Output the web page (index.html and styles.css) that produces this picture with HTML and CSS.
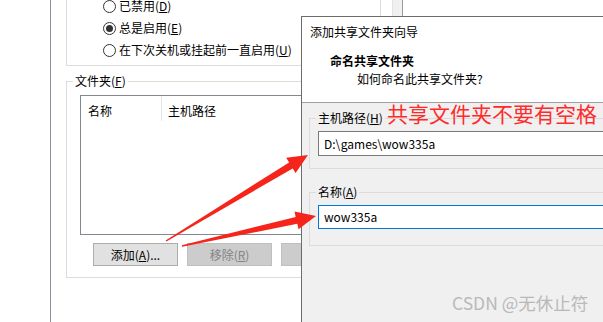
FILE: index.html
```html
<!DOCTYPE html>
<html lang="zh-CN">
<head>
<meta charset="utf-8">
<title>共享文件夹</title>
<link rel="stylesheet" href="styles.css">
</head>
<body>
<div class="desk">
  <div class="win">
    <div class="page">
      <div class="grp-top">
        <div class="radios">
          <div class="radio"><span class="dot"></span>已禁用(<u>D</u>)</div>
          <div class="radio"><span class="dot on"></span>总是启用(<u>E</u>)</div>
          <div class="radio"><span class="dot"></span>在下次关机或挂起前一直启用(<u>U</u>)</div>
        </div>
      </div>
      <fieldset class="grp grp-folder">
        <legend>文件夹(<u>F</u>)</legend>
        <div class="list">
          <div class="list-head">
            <span class="col c1">名称</span>
            <span class="col c2">主机路径</span>
          </div>
        </div>
        <div class="btns">
          <button class="btn">添加(<u>A</u>)...</button>
          <button class="btn dis">移除(<u>R</u>)</button>
          <button class="btn dis"></button>
        </div>
      </fieldset>
    </div>
    <div class="sbar"></div>
  </div>

  <div class="dialog">
    <div class="dlg-head">
      <div class="dlg-title">添加共享文件夹向导</div>
      <div class="dlg-h1">命名共享文件夹</div>
      <div class="dlg-h2">如何命名此共享文件夹?</div>
    </div>
    <div class="dlg-body">
      <fieldset class="grp dgrp g1">
        <legend>主机路径(<u>H</u>)</legend>
        <div class="tb">D:\games\wow335a</div>
      </fieldset>
      <fieldset class="grp dgrp g2">
        <legend>名称(<u>A</u>)</legend>
        <div class="tb focus">wow335a</div>
      </fieldset>
    </div>
  </div>

  <div class="note">共享文件夹不要有空格</div>
  <div class="mark">CSDN @无休止符</div>

  <svg class="arrows" width="603" height="322" viewBox="0 0 603 322">
    <polygon fill="#f5251b" points="165.6,240.4 289.1,162.4 286.2,157.7 308,155 295.6,173.1 292.7,168.4 166.4,241.6"/>
    <polygon fill="#f5251b" points="181.85,245.3 295.7,217.0 294.5,211.6 316,216 298.5,229.2 297.3,223.8 182.15,246.7"/>
  </svg>
</div>
</body>
</html>
```

FILE: styles.css
```css
* { box-sizing: border-box; }
html, body { margin: 0; padding: 0; }
body {
  width: 603px;
  height: 322px;
  overflow: hidden;
  background: #fff;
  font-family: "Noto Sans CJK SC", "Noto Sans", sans-serif;
  font-size: 12px;
  color: #000;
}
u { text-decoration: underline; text-underline-offset: 1px; }
.desk {
  position: relative;
  width: 603px;
  height: 322px;
  overflow: hidden;
}
.win {
  display: flex;
  margin-left: 50px;
  height: 322px;
  border-left: 1px solid #8a8e96;
  width: 353px;
}
.page {
  width: 341px;
  padding-left: 15px;
}
.sbar {
  width: 11px;
  background: #f0f0f0;
  border-left: 1px solid #e3e3e3;
  border-right: 1px solid #9a9a9a;
}
.grp-top {
  width: 315px;
  height: 71px;
  border: 1px solid #dcdcdc;
  border-top: none;
}
.radios {
  margin-top: -5px;
  padding-left: 36px;
}
.radio {
  display: flex;
  align-items: center;
  height: 22px;
  line-height: 16px;
  white-space: nowrap;
}
.dot {
  position: relative;
  width: 13px;
  height: 13px;
  border: 1px solid #333;
  border-radius: 50%;
  background: #fff;
  margin-right: 3px;
  flex: none;
}
.dot.on::after {
  content: "";
  position: absolute;
  left: 2px;
  top: 2px;
  width: 7px;
  height: 7px;
  border-radius: 50%;
  background: #333;
}
.grp {
  margin: 0;
  min-width: 0;
  border: 1px solid #dcdcdc;
}
.grp legend {
  padding: 0 2px;
  line-height: 16px;
  white-space: nowrap;
}
.grp-folder {
  width: 315px;
  margin-top: 7px;
  padding: 0 0 11px 13px;
}
.grp-folder legend { margin-left: -7px; }
.list {
  margin-top: 6px;
  width: 320px;
  height: 140px;
  border: 1px solid #828790;
  background: #fff;
}
.list-head {
  display: flex;
  height: 25px;
}
.col {
  padding-top: 7px;
  line-height: 16px;
  white-space: nowrap;
}
.c1 {
  width: 81px;
  padding-left: 7px;
  border-right: 1px solid #e5e5e5;
}
.c2 { padding-left: 6px; }
.btns {
  display: flex;
  gap: 9px;
  margin-top: 8px;
  margin-left: 13px;
}
.btn {
  width: 85px;
  height: 23px;
  padding: 0;
  border: 1px solid #adadad;
  background: #e1e1e1;
  font: inherit;
  color: #000;
  line-height: 16px;
}
.btn.dis {
  background: #cccccc;
  border-color: #bfbfbf;
  color: #838383;
}
.dialog {
  position: absolute;
  left: 301px;
  top: 16px;
  width: 330px;
  height: 320px;
  border-left: 1px solid #6c6c6c;
  border-top: 1px solid #6c6c6c;
  background: #f0f0f0;
}
.dlg-head {
  height: 86px;
  background: #fff;
  border-bottom: 1px solid #a0a0a0;
  padding-top: 7px;
  line-height: 16px;
}
.dlg-title { padding-left: 8px; }
.dlg-h1 { padding-left: 28px; margin-top: 13px; font-weight: bold; }
.dlg-h2 { padding-left: 55px; margin-top: 2px; }
.dlg-body { padding-left: 7px; }
.dgrp { width: 330px; padding: 0 0 0 8px; }
.dgrp legend { margin-left: -2px; }
.g1 { margin-top: 7px; padding-bottom: 12px; }
.g2 { margin-top: 15px; padding-bottom: 16px; }
.tb {
  margin-top: 5px;
  height: 25px;
  width: 320px;
  border: 1px solid #7a7a7a;
  background: #fff;
  padding-left: 5px;
  line-height: 23px;
  white-space: nowrap;
}
.tb.focus {
  height: 24px;
  line-height: 22px;
  border-color: #0078d7;
}
.note {
  position: absolute;
  left: 387px;
  top: 100px;
  font-size: 21px;
  line-height: 26px;
  color: #ff2b2b;
  white-space: nowrap;
}
.mark {
  position: absolute;
  left: 452px;
  top: 291px;
  font-size: 17.5px;
  line-height: 24px;
  color: #b9b9b9;
  white-space: nowrap;
}
.arrows {
  position: absolute;
  left: 0;
  top: 0;
  pointer-events: none;
}
```
